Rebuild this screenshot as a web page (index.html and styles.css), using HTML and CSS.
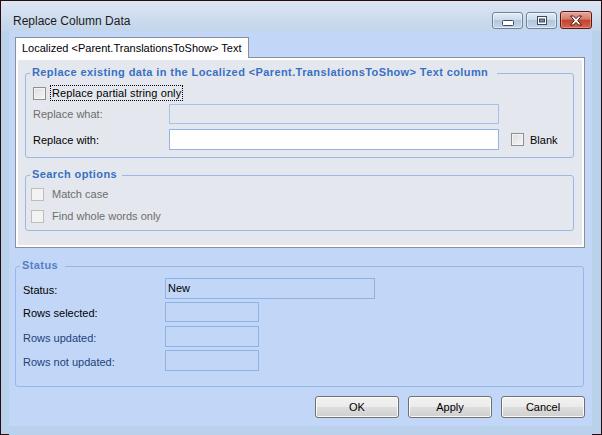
FILE: index.html
```html
<!DOCTYPE html>
<html>
<head>
<meta charset="utf-8">
<link rel="stylesheet" href="styles.css">
</head>
<body>
<div class="window">
  <div class="titlebar">
    <div class="title">Replace Column Data</div>
    <div class="caption-buttons">
      <div class="cbtn">
        <svg width="12" height="6" viewBox="0 0 12 6"><rect x="0.5" y="0.5" width="11" height="5" rx="1" fill="#fff" stroke="#3d4a5e"/></svg>
      </div>
      <div class="cbtn">
        <svg width="10" height="9" viewBox="0 0 10 9"><rect x="0.5" y="0.5" width="9" height="8" fill="#fff" stroke="#3d4a5e"/><rect x="2.5" y="3" width="5" height="3" fill="#7d8ca3" stroke="#3d4a5e" stroke-width="1"/></svg>
      </div>
      <div class="cbtn close">
        <svg width="14" height="11" viewBox="0 0 14 11"><path d="M1.5 1 L4.5 1 L7 3.6 L9.5 1 L12.5 1 L8.8 5.5 L12.5 10 L9.5 10 L7 7.4 L4.5 10 L1.5 10 L5.2 5.5 Z" fill="#fff" stroke="#4a1512" stroke-width="1" stroke-linejoin="round"/></svg>
      </div>
    </div>
  </div>
  <div class="client">
    <div class="tabs">
      <div class="tab">Localized &lt;Parent.TranslationsToShow&gt; Text</div>
    </div>
    <div class="panel">
      <fieldset class="group g1">
        <legend>Replace existing data in the Localized &lt;Parent.TranslationsToShow&gt; Text column</legend>
        <div class="gbody">
          <div class="row chkrow">
            <span class="chk"></span>
            <span class="focus">Replace partial string only</span>
          </div>
          <div class="row field-row">
            <span class="lbl disabled">Replace what:</span>
            <span class="input dis"></span>
          </div>
          <div class="row field-row r3">
            <span class="lbl">Replace with:</span>
            <span class="input white"></span>
            <span class="chk blank-chk"></span>
            <span class="blank-lbl">Blank</span>
          </div>
        </div>
      </fieldset>
      <fieldset class="group g2">
        <legend>Search options</legend>
        <div class="gbody">
          <div class="row chkrow">
            <span class="chk dchk"></span>
            <span class="disabled optlbl">Match case</span>
          </div>
          <div class="row chkrow r2">
            <span class="chk dchk"></span>
            <span class="disabled optlbl">Find whole words only</span>
          </div>
        </div>
      </fieldset>
    </div>
    <fieldset class="group status">
      <legend>Status</legend>
      <div class="gbody">
        <div class="srow s1">
          <span class="slbl">Status:</span>
          <span class="sbox wide">New</span>
        </div>
        <div class="srow s2">
          <span class="slbl">Rows selected:</span>
          <span class="sbox"></span>
        </div>
        <div class="srow s3">
          <span class="slbl blue">Rows updated:</span>
          <span class="sbox"></span>
        </div>
        <div class="srow s4">
          <span class="slbl blue">Rows not updated:</span>
          <span class="sbox"></span>
        </div>
      </div>
    </fieldset>
    <div class="buttons">
      <div class="btn">OK</div>
      <div class="btn">Apply</div>
      <div class="btn">Cancel</div>
    </div>
  </div>
</div>
</body>
</html>
```

FILE: styles.css
```css
html, body {
  margin: 0;
  padding: 0;
  background: #ffffff;
}
body {
  font-family: "Liberation Sans", Arial, sans-serif;
  font-size: 11px;
  color: #000;
}
.window {
  width: 602px;
  height: 435px;
  box-sizing: border-box;
  border: 1px solid #2a0c0c;
  background: #b9d1ea;
  display: flex;
  flex-direction: column;
}
.titlebar {
  height: 30px;
  flex: none;
  display: flex;
  align-items: flex-start;
  background: linear-gradient(#dbe6f3, #c3d5ea);
}
.title {
  font-size: 12px;
  color: #1b1b1b;
  margin: 13px 0 0 12px;
  line-height: 14px;
  flex: 1;
}
.caption-buttons {
  display: flex;
  gap: 3px;
  margin: 11px 9px 0 0;
}
.cbtn {
  width: 29px;
  height: 15px;
  border: 1px solid #6f829c;
  border-radius: 3px;
  background: linear-gradient(#e3ecf6 0%, #cbdaea 45%, #b2c7de 50%, #c3d5e8 100%);
  display: flex;
  align-items: center;
  justify-content: center;
  box-shadow: inset 0 0 0 1px rgba(255,255,255,0.5);
}
.cbtn:first-child svg { margin-top: 5px; }
.cbtn.close {
  width: 30px;
  height: 16px;
  margin-top: -1px;
  border-color: #5c1410;
  background: linear-gradient(#e8a99e 0%, #d57a6c 45%, #c2432f 52%, #d6654f 100%);
  box-shadow: inset 0 0 0 1px rgba(255,200,190,0.45);
}
.client {
  flex: 1;
  margin: 0 9px 0 8px;
  background: #c2d7f8;
  display: flex;
  flex-direction: column;
  border-bottom: 8px solid #b9d1ea;
  box-shadow: 0 7px 0 0 #b9d1ea, 0 8px 0 0 #33c9e0;
}
.tabs {
  margin: 6px 0 0 6px;
  display: flex;
}
.tab {
  width: 234px;
  box-sizing: border-box;
  height: 21px;
  background: #ffffff;
  border: 1px solid #8d9097;
  border-bottom: none;
  padding: 4px 0 0 6px;
  line-height: 13px;
  position: relative;
  z-index: 1;
  margin-bottom: -1px;
}
.panel {
  margin: 0 7px 0 6px;
  height: 191px;
  box-sizing: border-box;
  border: 1px solid #8d9097;
  box-shadow: inset 0 0 0 2px #ffffff;
  background: #e4e8ee;
  padding: 8px 10px 0 9px;
}
.group {
  margin: 0;
  padding: 0;
  border: 1px solid #99b9e6;
  border-radius: 3px;
  min-width: 0;
}
.group legend {
  margin-left: 4px;
  padding: 0 9px 0 2px;
  line-height: 13px;
  height: 14px;
  font-weight: bold;
  letter-spacing: 0.4px;
  color: #3870c2;
}
.gbody {
  padding: 5px 7px 7px 7px;
}
.row {
  display: flex;
  align-items: center;
}
.chkrow {
  height: 16px;
}
.chk {
  width: 11px;
  height: 11px;
  border: 1px solid #8e8f8f;
  background: linear-gradient(135deg, #dcdcdc, #f7f7f7);
  box-shadow: inset 0 0 0 1px #f4f4f4;
  flex: none;
}
.dchk {
  border-color: #bdbdbd;
  background: #f3f3f3;
  box-shadow: none;
}
.focus {
  margin-left: 5px;
  padding: 0 1px;
  outline: 1px dotted #000;
  outline-offset: 0;
  line-height: 14px;
  color: #000;
  letter-spacing: 0.1px;
}
.field-row {
  height: 20px;
  margin-top: 3px;
}
.field-row.r3 {
  margin-top: 5px;
  height: 21px;
}
.lbl {
  width: 136px;
  flex: none;
}
.disabled {
  color: #6d6d6d;
}
.input {
  width: 330px;
  height: 100%;
  box-sizing: border-box;
  border: 1px solid #a6c2ea;
  flex: none;
}
.input.dis {
  background: #e4e8ee;
}
.input.white {
  background: #ffffff;
  border-color: #93b5e6;
}
.blank-chk {
  margin-left: 12px;
}
.blank-lbl {
  margin-left: 6px;
}
.g1 .gbody {
  padding-bottom: 7px;
}
.g2 {
  margin-top: 10px;
}
.g2 .gbody {
  padding: 4px 7px 6px 5px;
}
.g2 legend {
  padding-right: 5px;
}
.optlbl {
  margin-left: 8px;
}
.chkrow.r2 {
  margin-top: 6px;
}
.status {
  margin: 11px 8px 0 6px;
  border-color: #95b8e8;
}
.status legend {
  margin-left: 4px;
  padding: 0 7px 0 2px;
  color: #5580c2;
}
.status .gbody {
  padding: 5px 7px 15px 7px;
}
.srow {
  display: flex;
  align-items: center;
  height: 21px;
}
.s2 { height: 20px; margin-top: 3px; }
.s3 { margin-top: 4px; }
.s4 { margin-top: 3px; }
.slbl {
  width: 142px;
  flex: none;
  padding-top: 2px;
}
.slbl.blue {
  color: #1d4279;
}
.sbox {
  width: 94px;
  height: 100%;
  box-sizing: border-box;
  border: 1px solid #8db2e4;
  flex: none;
}
.sbox.wide {
  width: 210px;
  padding: 3px 0 0 2px;
  line-height: 13px;
}
.buttons {
  display: flex;
  justify-content: flex-end;
  gap: 9px;
  margin: 9px 7px 0 0;
}
.btn {
  width: 84px;
  height: 22px;
  box-sizing: border-box;
  border: 1px solid #707070;
  border-radius: 3px;
  background: linear-gradient(#f2f2f2 0%, #ebebeb 50%, #dddddd 51%, #cfcfcf 100%);
  box-shadow: inset 0 0 0 1px #fbfbfb;
  display: flex;
  align-items: center;
  justify-content: center;
  color: #000;
}
```
